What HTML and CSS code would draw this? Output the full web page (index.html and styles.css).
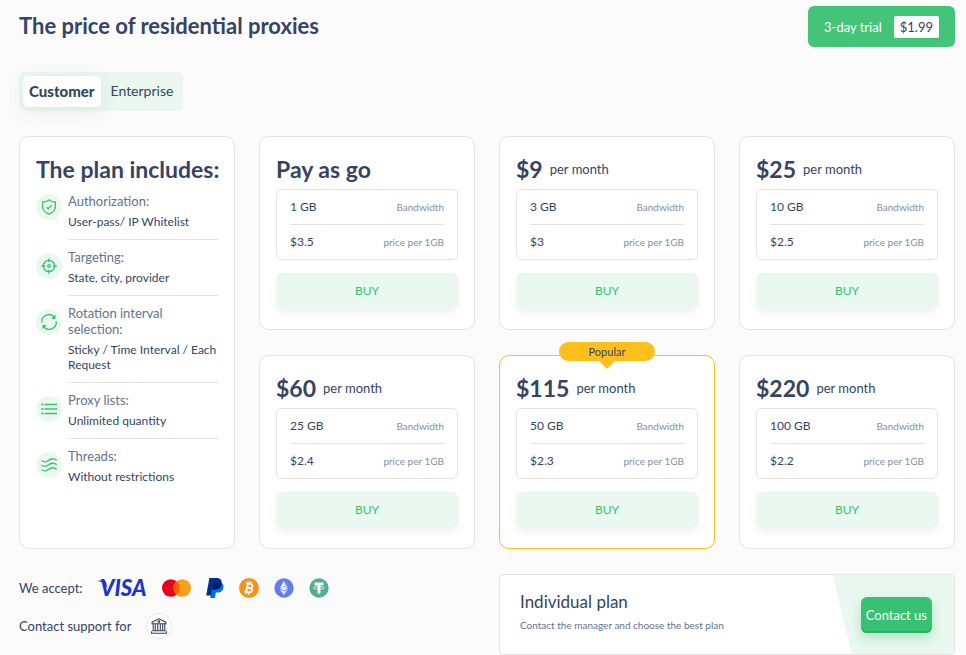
FILE: index.html
```html
<!DOCTYPE html>
<html lang="en">
<head>
<meta charset="utf-8">
<meta name="viewport" content="width=device-width, initial-scale=1">
<title>Residential proxies pricing</title>
<link rel="stylesheet" href="styles.css">
</head>
<body>
<main class="page">
  <header class="header">
    <h1 class="heading">The price of residential proxies</h1>
    <a class="trial" href="#trial">3-day trial <span class="trial-price">$1.99</span></a>
  </header>

  <div class="tabs" role="tablist">
    <button class="tab tab-active" type="button" role="tab" aria-selected="true">Customer</button>
    <button class="tab" type="button" role="tab" aria-selected="false">Enterprise</button>
  </div>

  <div class="plans">
    <section class="card includes">
      <h2 class="title">The plan includes:</h2>
      <ul class="features">
        <li class="feature">
          <span class="feature-icon"><svg viewBox="0 0 16 16"><path d="M8 .9c1.9 1.4 4 2 6.4 2.1v4.2c0 3.7-2.5 6.5-6.4 8-3.9-1.5-6.4-4.3-6.4-8V3C4 2.900 6.100 2.300 8 .9z"/><path d="M5.500 8.200l1.800 1.600 3.300-3.500"/></svg></span>
          <div class="feature-text"><h3>Authorization:</h3><p>User-pass/ IP Whitelist</p></div>
        </li>
        <li class="feature">
          <span class="feature-icon"><svg viewBox="0 0 16 16"><circle cx="8" cy="8" r="5.700"/><circle cx="8" cy="8" r="1.300"/><path d="M8 .3v4M8 11.700v4M.3 8h4M11.700 8h4"/></svg></span>
          <div class="feature-text"><h3>Targeting:</h3><p>State, city, provider</p></div>
        </li>
        <li class="feature">
          <span class="feature-icon"><svg viewBox="0 0 16 16"><path d="M.8 8.600A7.100 7.100 0 0 1 13.600 3.600M15.200 7.400A7.100 7.100 0 0 1 2.400 12.400"/><path class="solid" d="M14.500.8v4.100h-4.300zM1.500 15.200v-4.100h4.300z"/></svg></span>
          <div class="feature-text"><h3>Rotation interval selection:</h3><p>Sticky / Time Interval / Each Request</p></div>
        </li>
        <li class="feature">
          <span class="feature-icon"><svg viewBox="0 0 16 16"><path d="M3.500 3.500H16M3.500 8H16M3.500 12.500H16"/><path class="solid" d="M.4 2.600h1.900v1.800H.4zM.4 7.100h1.900v1.800H.4zM.4 11.600h1.900v1.800H.4z"/></svg></span>
          <div class="feature-text"><h3>Proxy lists:</h3><p>Unlimited quantity</p></div>
        </li>
        <li class="feature">
          <span class="feature-icon"><svg viewBox="0 0 16 16"><path d="M.3 3.500c2.500 2 4.800 1.800 7 0s5-2.800 8.400-.3M.3 8c2.500 2 4.800 1.800 7 0s5-2.800 8.400-.3M.3 12.500c2.500 2 4.800 1.800 7 0s5-2.800 8.400-.3"/></svg></span>
          <div class="feature-text"><h3>Threads:</h3><p>Without restrictions</p></div>
        </li>
      </ul>
    </section>

    <section class="card">
      <h2 class="title">Pay as go</h2>
      <div class="details"><table>
        <tr><td>1 GB</td><th scope="row">Bandwidth</th></tr>
        <tr><td>$3.5</td><th scope="row">price per 1GB</th></tr>
      </table></div>
      <button class="buy" type="button">BUY</button>
    </section>
    <section class="card">
      <h2 class="title">$9 <small>per month</small></h2>
      <div class="details"><table>
        <tr><td>3 GB</td><th scope="row">Bandwidth</th></tr>
        <tr><td>$3</td><th scope="row">price per 1GB</th></tr>
      </table></div>
      <button class="buy" type="button">BUY</button>
    </section>
    <section class="card">
      <h2 class="title">$25 <small>per month</small></h2>
      <div class="details"><table>
        <tr><td>10 GB</td><th scope="row">Bandwidth</th></tr>
        <tr><td>$2.5</td><th scope="row">price per 1GB</th></tr>
      </table></div>
      <button class="buy" type="button">BUY</button>
    </section>
    <section class="card">
      <h2 class="title">$60 <small>per month</small></h2>
      <div class="details"><table>
        <tr><td>25 GB</td><th scope="row">Bandwidth</th></tr>
        <tr><td>$2.4</td><th scope="row">price per 1GB</th></tr>
      </table></div>
      <button class="buy" type="button">BUY</button>
    </section>
    <section class="card card-popular">
      <span class="badge">Popular</span>
      <h2 class="title">$115 <small>per month</small></h2>
      <div class="details"><table>
        <tr><td>50 GB</td><th scope="row">Bandwidth</th></tr>
        <tr><td>$2.3</td><th scope="row">price per 1GB</th></tr>
      </table></div>
      <button class="buy" type="button">BUY</button>
    </section>
    <section class="card">
      <h2 class="title">$220 <small>per month</small></h2>
      <div class="details"><table>
        <tr><td>100 GB</td><th scope="row">Bandwidth</th></tr>
        <tr><td>$2.2</td><th scope="row">price per 1GB</th></tr>
      </table></div>
      <button class="buy" type="button">BUY</button>
    </section>

    <section class="payments">
      <div class="pay-row">
        <span>We accept:</span>
        <div class="logos">
          <svg class="visa" width="49" height="20" viewBox="0 0 49 20" role="img" aria-label="Visa"><text x="2" y="18">VISA</text><path d="M.2 2.600h5.500c1.300 0 2 .6 2.400 1.900l1.400 6C7.800 6.600 4.600 4.200.2 3.100z"/></svg>
          <svg width="29" height="20" viewBox="0 0 29 20"><circle cx="8.800" cy="10" r="8.800" fill="#eb001b"/><circle cx="20.200" cy="10" r="8.800" fill="#f79e1b"/><path fill="#ff5f00" d="M14.500 3.300a8.800 8.800 0 0 1 0 13.400 8.800 8.800 0 0 1 0-13.400z"/></svg>
          <svg width="18" height="20" viewBox="0 0 18 20"><path fill="#0070e0" d="M15.300 4.800c2 1 2.600 2.900 2.100 5.100-.7 3.300-3.100 4.700-6.200 4.700H9.900L8.900 20H4.200l.9-5L6.600 7z"/><path fill="#003087" d="M3.400 0h7c3.900 0 5.800 2.100 5.200 5.600-.7 3.900-3.400 5.900-7.300 5.900H6.200l-1.200 6.100H.2z"/><path fill="#001c64" d="M7.800 4.700h7.500q.4.500.3 1.200c-.7 3.700-3.400 5.600-7.300 5.600H6.600z"/></svg>
          <svg width="20" height="20" viewBox="0 0 20 20"><circle cx="10" cy="10" r="10" fill="#f7931a"/><g fill="none" stroke="#fff" stroke-width="1.900" transform="rotate(13 10 10)"><path d="M6 5.600h4.700a2.100 2.100 0 0 1 0 4.300H8 M8 9.900h3.100a2.250 2.250 0 0 1 0 4.500H6M8 5.600v8.800"/><path stroke-width="1.300" d="M8.700 3.500v2M11 3.500v2M8.700 14.500v2M11 14.500v2"/></g></svg>
          <svg width="20" height="20" viewBox="0 0 20 20"><circle cx="10" cy="10" r="9.700" fill="#627eea"/><path fill="#fff" d="M10 3v5.300L6 10.100zM10 13.300V17l-4-5.600z"/><path fill="#c9d3f9" d="M10 3v5.300l4 1.800zM10 13.300V17l4-5.600z"/><path fill="#e4e9fc" d="M6 10.400L10 8.500l4 1.900-4 2.300z"/></svg>
          <svg width="20" height="20" viewBox="0 0 20 20"><circle cx="10" cy="10" r="9.700" fill="#53ae94"/><path fill="#fff" d="M5.500 4.600h9v2.600h-3.100v8.400H8.600V7.200H5.500z"/><ellipse cx="10" cy="9.800" rx="5.600" ry="1.300" fill="none" stroke="#fff" stroke-width=".7"/></svg>
        </div>
      </div>
      <div class="pay-row">
        <span>Contact support for</span>
        <span class="bank"><svg width="16" height="16" viewBox="0 0 16 16" fill="none" stroke="#364463" stroke-width="1.100"><path d="M1.100 5.800V4.200L8 .8l6.900 3.400v1.600zM2.200 6v6.600M4.300 6v6.600M6.700 6v6.600M9.300 6v6.600M11.700 6v6.600M13.800 6v6.600M1.400 12.700h13.200M.6 13.300v1.900h14.800v-1.900"/><circle cx="8" cy="3.600" r=".8"/></svg></span>
      </div>
    </section>

    <section class="individual">
      <div class="individual-text">
        <h2>Individual plan</h2>
        <p>Contact the manager and choose the best plan</p>
      </div>
      <div class="individual-action"><a class="contact" href="#contact">Contact us</a></div>
    </section>
  </div>
</main>
</body>
</html>
```
FILE: styles.css
```css
* {
  box-sizing: border-box;
}

body {
  margin: 0;
  background: #fbfbfb;
  color: #364463;
  font: 14px/20px Lato, sans-serif;
}

h1, h2, h3, p, ul {
  margin: 0;
  padding: 0;
}

button {
  border: 0;
  color: inherit;
  font: inherit;
  cursor: pointer;
}

a {
  color: inherit;
  text-decoration: none;
}

.page {
  padding: 6px 11px 0 19px;
}

.header {
  display: flex;
  justify-content: space-between;
  align-items: flex-start;
}

.heading {
  font-size: 22px;
  line-height: 40px;
}

.trial {
  display: flex;
  align-items: center;
  gap: 12px;
  height: 41px;
  padding: 0 16px;
  border-radius: 6px;
  background: #43c479;
  color: #fff;
  font-size: 13px;
}

.trial-price {
  padding: 1px 6px;
  border-radius: 2px;
  background: #fff;
  color: #364463;
}

.tabs {
  display: inline-flex;
  margin: 25px 0;
  padding: 4px;
  border-radius: 6px;
  background: #eaf8ef;
  vertical-align: top;
}

.tab {
  height: 31px;
  padding: 0 6px 1px;
  border-radius: 5px;
  background: transparent;
}

.tab + .tab {
  margin-left: 4px;
}

.tab-active {
  background: #fff;
  font-size: 15px;
  font-weight: 900;
  box-shadow: 0 4px 20px rgba(54, 90, 120, 0.1);
}

.plans {
  display: grid;
  grid-template-columns: repeat(4, minmax(0, 1fr));
  gap: 25px 24px;
}

.card {
  position: relative;
  padding: 16px 16px 21px;
  border: 1px solid #e4e4e4;
  border-radius: 10px;
  background: #fff;
}

.includes {
  grid-row: span 2;
}

.title {
  display: flex;
  align-items: center;
  gap: 7px;
  font-size: 23px;
  line-height: 32px;
  white-space: nowrap;
}

.title small {
  font-size: 13px;
  font-weight: 400;
}

.features {
  margin-top: 8px;
  list-style: none;
}

.feature {
  display: flex;
  gap: 6px;
}

.feature-icon {
  display: flex;
  flex: none;
  align-items: center;
  justify-content: center;
  width: 26px;
  height: 26px;
  margin-top: 1px;
  border-radius: 50%;
  background: #ebf8f0;
}

.feature + .feature .feature-icon {
  margin-top: 4px;
}

.feature-icon svg {
  width: 16px;
  height: 16px;
  fill: none;
  stroke: #38c172;
  stroke-width: 1.3;
}

.feature-icon .solid {
  fill: #38c172;
  stroke: none;
}

.feature-text {
  flex: 1;
  min-width: 0;
  margin-bottom: 9px;
  padding-bottom: 10px;
  border-bottom: 1px solid #e4e4e4;
}

.feature:last-child .feature-text {
  border-bottom: 0;
}

.feature h3 {
  color: #65728d;
  font-size: 13px;
  font-weight: 400;
  line-height: 16px;
}

.feature p {
  margin-top: 5px;
  font-size: 12px;
  line-height: 15px;
}

.details {
  margin: 4px 0 13px;
  padding: 0 13px;
  border: 1px solid #e4e4e4;
  border-radius: 5px;
}

.details table {
  width: 100%;
  border-collapse: separate;
  border-spacing: 0;
  font-size: 12px;
}

.details td,
.details th {
  height: 34px;
  padding: 0;
  text-align: left;
}

.details th {
  color: #8b8f9b;
  font-size: 10px;
  font-weight: 400;
  text-align: right;
}

.details tr:first-child > * {
  height: 35px;
  border-bottom: 1px solid #e4e4e4;
}

.buy {
  display: block;
  width: 100%;
  height: 35px;
  border-radius: 6px;
  background: #eaf8ef;
  color: #38c172;
  font-size: 12px;
  box-shadow: 0 5px 10px rgba(0, 0, 0, 0.06);
}

.card-popular {
  border-color: #ffbf1c;
}

.badge {
  position: absolute;
  top: -14px;
  left: 50%;
  width: 96px;
  margin-left: -48px;
  border-radius: 10px;
  background: #ffbf1c;
  font-size: 11px;
  line-height: 19px;
  text-align: center;
}

.badge::after {
  content: "";
  position: absolute;
  top: 100%;
  left: 50%;
  margin-left: -8px;
  border: 8px solid transparent;
  border-top-color: #ffbf1c;
  border-bottom: 0;
}

.payments {
  grid-column: span 2;
  font-size: 13px;
}

.pay-row {
  display: flex;
  align-items: center;
  gap: 15px;
  height: 28px;
}

.pay-row + .pay-row {
  margin-top: 10px;
}

.logos {
  display: flex;
  align-items: center;
  gap: 15px;
}

.visa {
  overflow: visible;
  fill: #1a34cf;
  font-size: 22px;
  font-style: italic;
  font-weight: 900;
}

.bank {
  display: flex;
  align-items: center;
  justify-content: center;
  width: 26px;
  height: 26px;
  border: 1px solid #e8e8e8;
  border-radius: 50%;
  background: #fff;
}

.individual {
  display: flex;
  grid-column: span 2;
  min-height: 81px;
  overflow: hidden;
  border: 1px solid #e4e4e4;
  border-radius: 4px;
  background: #fff;
}

.individual-text {
  flex: 1;
  padding: 15px 20px;
}

.individual h2 {
  font-size: 17px;
  font-weight: 400;
  line-height: 24px;
}

.individual p {
  margin-top: 3px;
  color: #65728d;
  font-size: 10px;
  line-height: 16px;
}

.individual-action {
  display: flex;
  align-items: center;
  padding: 0 22px 0 28px;
  background: #eaf8ef;
  clip-path: polygon(0 0, 100% 0, 100% 100%, 19px 100%);
}

.contact {
  padding: 8px 5px;
  border-radius: 6px;
  background: #38c172;
  color: #fff;
  font-size: 13px;
  box-shadow: inset 0 -2px #30ae64, 0 5px 12px rgba(56, 193, 114, 0.35);
}
```
